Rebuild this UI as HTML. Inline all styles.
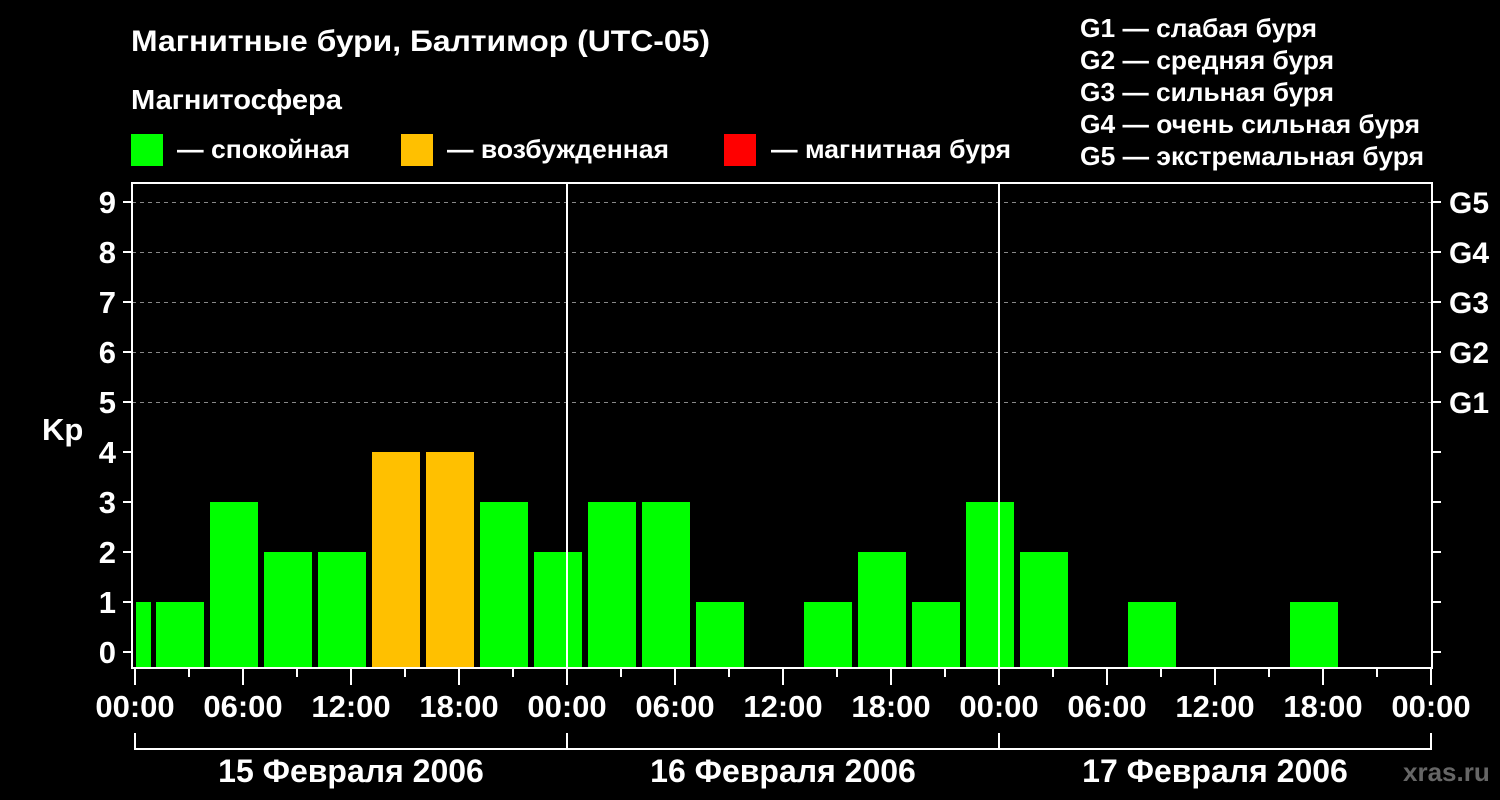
<!DOCTYPE html>
<html><head><meta charset="utf-8"><style>
html,body{margin:0;padding:0;background:#000;width:1500px;height:800px;overflow:hidden}
svg{display:block}
text{font-family:"Liberation Sans",Arial,sans-serif;font-weight:bold;fill:#fff}
</style></head><body>
<svg width="1500" height="800" viewBox="0 0 1500 800">
<rect width="1500" height="800" fill="#000"/>
<text x="131" y="51" font-size="30" textLength="579" lengthAdjust="spacingAndGlyphs">Магнитные бури, Балтимор (UTC-05)</text>
<text x="131" y="109" font-size="28" textLength="211" lengthAdjust="spacingAndGlyphs">Магнитосфера</text>
<rect x="131" y="134" width="32" height="32" fill="#00ff00"/>
<text x="177" y="158" font-size="26" textLength="173" lengthAdjust="spacingAndGlyphs">— спокойная</text>
<rect x="401" y="134" width="32" height="32" fill="#ffc000"/>
<text x="447" y="158" font-size="26" textLength="222" lengthAdjust="spacingAndGlyphs">— возбужденная</text>
<rect x="724" y="134" width="32" height="32" fill="#ff0000"/>
<text x="771" y="158" font-size="26" textLength="240" lengthAdjust="spacingAndGlyphs">— магнитная буря</text>
<g font-size="26">
<text x="1080" y="37" textLength="237" lengthAdjust="spacingAndGlyphs">G1 — слабая буря</text>
<text x="1080" y="69" textLength="254" lengthAdjust="spacingAndGlyphs">G2 — средняя буря</text>
<text x="1080" y="101" textLength="254" lengthAdjust="spacingAndGlyphs">G3 — сильная буря</text>
<text x="1080" y="133" textLength="340" lengthAdjust="spacingAndGlyphs">G4 — очень сильная буря</text>
<text x="1080" y="165" textLength="344" lengthAdjust="spacingAndGlyphs">G5 — экстремальная буря</text>
</g>
<g stroke="#888" stroke-width="1" stroke-dasharray="4,4">
<line x1="132" y1="202.5" x2="1432" y2="202.5"/>
<line x1="132" y1="252.5" x2="1432" y2="252.5"/>
<line x1="132" y1="302.5" x2="1432" y2="302.5"/>
<line x1="132" y1="352.5" x2="1432" y2="352.5"/>
<line x1="132" y1="402.5" x2="1432" y2="402.5"/>
</g>
<g>
<rect x="136" y="602" width="15" height="66" fill="#00ff00"/>
<rect x="156" y="602" width="48" height="66" fill="#00ff00"/>
<rect x="210" y="502" width="48" height="166" fill="#00ff00"/>
<rect x="264" y="552" width="48" height="116" fill="#00ff00"/>
<rect x="318" y="552" width="48" height="116" fill="#00ff00"/>
<rect x="372" y="452" width="48" height="216" fill="#ffc000"/>
<rect x="426" y="452" width="48" height="216" fill="#ffc000"/>
<rect x="480" y="502" width="48" height="166" fill="#00ff00"/>
<rect x="534" y="552" width="48" height="116" fill="#00ff00"/>
<rect x="588" y="502" width="48" height="166" fill="#00ff00"/>
<rect x="642" y="502" width="48" height="166" fill="#00ff00"/>
<rect x="696" y="602" width="48" height="66" fill="#00ff00"/>
<rect x="804" y="602" width="48" height="66" fill="#00ff00"/>
<rect x="858" y="552" width="48" height="116" fill="#00ff00"/>
<rect x="912" y="602" width="48" height="66" fill="#00ff00"/>
<rect x="966" y="502" width="48" height="166" fill="#00ff00"/>
<rect x="1020" y="552" width="48" height="116" fill="#00ff00"/>
<rect x="1128" y="602" width="48" height="66" fill="#00ff00"/>
<rect x="1290" y="602" width="48" height="66" fill="#00ff00"/>
</g>
<g stroke="#fff" stroke-width="2" fill="none">
<path d="M132 183 V668 H1432 V183 Z"/>
<line x1="567" y1="183" x2="567" y2="668"/>
<line x1="999" y1="183" x2="999" y2="668"/>
<path d="M123 652H132M123 602H132M123 552H132M123 502H132M123 452H132M123 402H132M123 352H132M123 302H132M123 252H132M123 202H132"/>
<path d="M1432 652H1441M1432 602H1441M1432 552H1441M1432 502H1441M1432 452H1441M1432 402H1441M1432 352H1441M1432 302H1441M1432 252H1441M1432 202H1441"/>
<path d="M135 668V685M243 668V685M351 668V685M459 668V685M567 668V685M675 668V685M783 668V685M891 668V685M999 668V685M1107 668V685M1215 668V685M1323 668V685M1431 668V685"/>
<path d="M189 668V677M297 668V677M405 668V677M513 668V677M621 668V677M729 668V677M837 668V677M945 668V677M1053 668V677M1161 668V677M1269 668V677M1377 668V677"/>
<path d="M135 733V749H1431V733M567 733V749M999 733V749"/>
</g>
<g font-size="31" text-anchor="end">
<text x="116" y="663">0</text><text x="116" y="613">1</text><text x="116" y="563">2</text>
<text x="116" y="513">3</text><text x="116" y="463">4</text><text x="116" y="413">5</text>
<text x="116" y="363">6</text><text x="116" y="313">7</text><text x="116" y="263">8</text>
<text x="116" y="213">9</text>
</g>
<text x="42" y="440" font-size="31">Kp</text>
<g font-size="30">
<text x="1449" y="213">G5</text><text x="1449" y="263">G4</text><text x="1449" y="313">G3</text>
<text x="1449" y="363">G2</text><text x="1449" y="413">G1</text>
</g>
<g font-size="31" text-anchor="middle">
<text x="135" y="717">00:00</text><text x="243" y="717">06:00</text><text x="351" y="717">12:00</text>
<text x="459" y="717">18:00</text><text x="567" y="717">00:00</text><text x="675" y="717">06:00</text>
<text x="783" y="717">12:00</text><text x="891" y="717">18:00</text><text x="999" y="717">00:00</text>
<text x="1107" y="717">06:00</text><text x="1215" y="717">12:00</text><text x="1323" y="717">18:00</text>
<text x="1431" y="717">00:00</text>
</g>
<g font-size="32" text-anchor="middle">
<text x="351" y="782">15 Февраля 2006</text>
<text x="783" y="782">16 Февраля 2006</text>
<text x="1215" y="782">17 Февраля 2006</text>
</g>
<text x="1403" y="781" font-size="26" style="fill:#666">xras.ru</text>
</svg>
</body></html>
